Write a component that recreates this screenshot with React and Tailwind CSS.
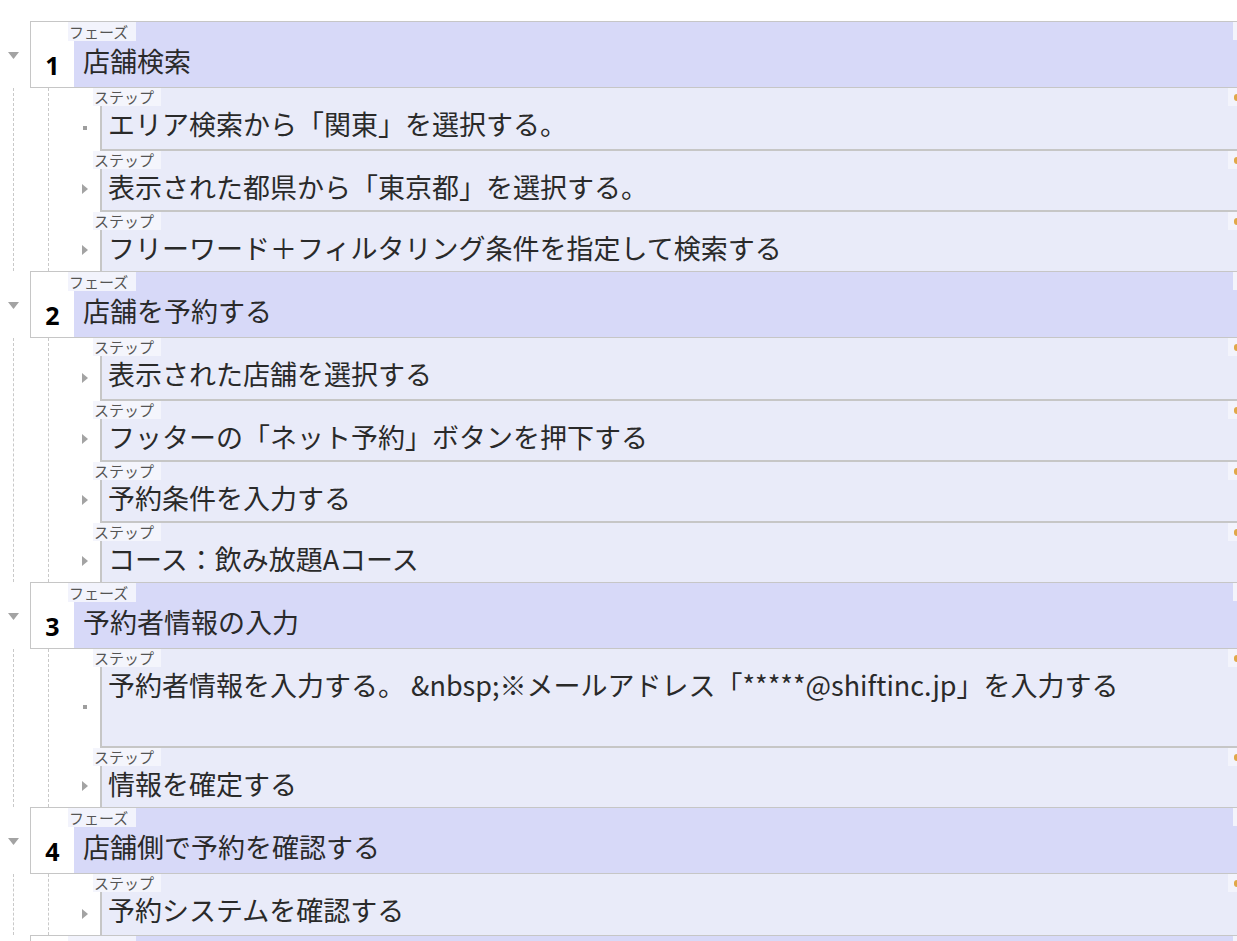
import React from "react";

const phases = [
  {
    no: 1,
    title: "店舗検索",
    steps: [
      { text: "エリア検索から「関東」を選択する。", leaf: true },
      { text: "表示された都県から「東京都」を選択する。" },
      { text: "フリーワード＋フィルタリング条件を指定して検索する" },
    ],
  },
  {
    no: 2,
    title: "店舗を予約する",
    steps: [
      { text: "表示された店舗を選択する" },
      { text: "フッターの「ネット予約」ボタンを押下する" },
      { text: "予約条件を入力する" },
      { text: "コース：飲み放題Aコース" },
    ],
  },
  {
    no: 3,
    title: "予約者情報の入力",
    steps: [
      {
        text: "予約者情報を入力する。 &nbsp;※メールアドレス「*****@shiftinc.jp」を入力する",
        leaf: true,
        tall: true,
      },
      { text: "情報を確定する" },
    ],
  },
  {
    no: 4,
    title: "店舗側で予約を確認する",
    steps: [{ text: "予約システムを確認する" }],
  },
  // next phase, only its top edge shows in the viewport
  { no: 5, title: "", steps: [], hidden: true },
];

const Corner = ({ wide }) => (
  <div
    className={
      "absolute right-0 top-0 flex h-[18px] items-center justify-end bg-[#f3f4fc] " +
      (wide ? "w-[9px]" : "w-[4px]")
    }
  >
    {wide && <span className="block h-[7px] w-[3px] rounded-l-sm bg-[#e0a848]" />}
  </div>
);

const StepRow = ({ step, first }) => (
  <div className="flex">
    <div className="flex w-[51px] justify-end pr-[12px] pt-[19px]">
      <div className="flex w-[6px] items-center justify-center">
        {step.leaf ? (
          <span className="block h-[4px] w-[4px] bg-[#9e9e9e]" />
        ) : (
          <svg width="6" height="10" viewBox="0 0 6 10">
            <path d="M0 0 L6 5 L0 10 Z" fill="#a3a3a3" />
          </svg>
        )}
      </div>
    </div>
    <div
      className={
        "relative flex-1 border-l-2 border-[#c6c6c6] bg-[#e9ebf9] pt-[19px] " +
        (first ? "" : "border-t-2")
      }
    >
      <div className="absolute left-[-9px] top-0 h-[18px] w-[68px] bg-[#f4f5fc] pl-[1px] text-[15px] leading-[18px] text-[#555]">
        ステップ
      </div>
      <Corner wide />
      <div
        className={
          "pl-[6px] text-[27px] leading-[34px] text-[#2a2a2a] " +
          (step.tall ? "h-[78px]" : first ? "h-[42px]" : "h-[40px]")
        }
      >
        {step.text}
      </div>
    </div>
  </div>
);

const Phase = ({ phase }) => (
  <div>
    <div className="flex h-[67px]">
      <div className="w-[30px] pl-[8px] pt-[31px]">
        <svg width="11" height="7" viewBox="0 0 11 7">
          <path d="M0 0 L11 0 L5.5 7 Z" fill="#a3a3a3" />
        </svg>
      </div>
      <div className="relative flex flex-1 border-y border-l border-[#c6c6c6]">
        <div className="flex w-[43px] items-center justify-center bg-white pt-[22px] font-['Noto_Sans',sans-serif] text-[25px] font-bold text-black">
          {phase.hidden ? "" : phase.no}
        </div>
        <div className="flex flex-1 items-center bg-[#d7d9f8] pl-[9px] pt-[14px] text-[27px] text-[#2a2a2a]">
          {phase.title}
        </div>
        <div className="absolute left-[37px] top-0 h-[19px] w-[68px] bg-[#f2f3fc] pl-[1px] text-[15px] leading-[19px] text-[#555]">
          {phase.hidden ? "" : "フェーズ"}
        </div>
        <Corner />
      </div>
    </div>
    {phase.steps.length > 0 && (
      <div className="ml-[13px] border-l border-dashed border-[#c9c9c9]">
        <div className="ml-[34px] border-l border-dashed border-[#c9c9c9]">
          {phase.steps.map((s, i) => (
            <StepRow key={i} step={s} first={i === 0} />
          ))}
        </div>
      </div>
    )}
  </div>
);

export default function App() {
  return (
    <div className="h-[941px] w-[1237px] overflow-hidden bg-white pt-[21px] font-['Noto_Sans_CJK_JP',sans-serif]">
      {phases.map((p) => (
        <Phase key={p.no} phase={p} />
      ))}
    </div>
  );
}
